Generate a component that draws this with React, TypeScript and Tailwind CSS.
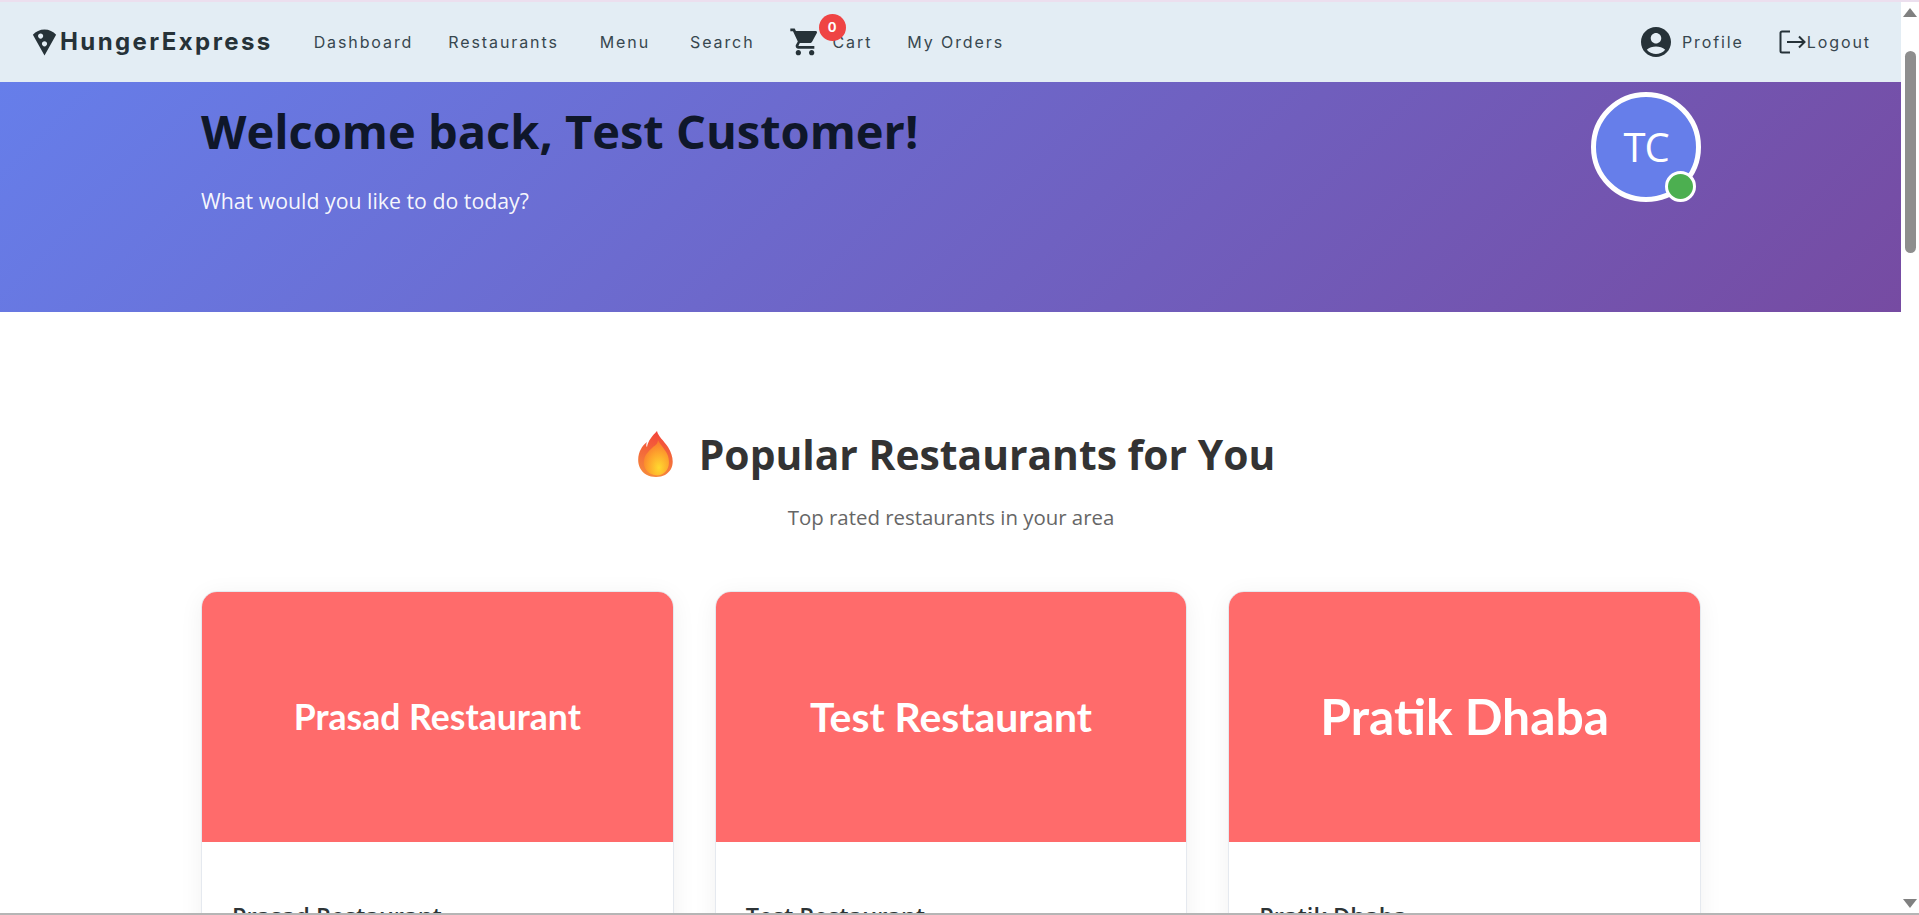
import React from 'react';

const navFont = "font-['Inter','Roboto',sans-serif]";
const uiFont = "font-['Open_Sans','Noto_Sans',sans-serif]";

const restaurants = [
  { name: 'Prasad Restaurant', banner: 'text-[35.600px]' },
  { name: 'Test Restaurant', banner: 'text-[40.900px]' },
  { name: 'Pratik Dhaba', banner: 'text-[49.800px]' },
];

function NavLink({ label, className = '' }: { label: string; className?: string }) {
  return <a className={`text-[16px] leading-none tracking-[1.9px] text-[#37474f] ${className}`}>{label}</a>;
}

function PizzaIcon() {
  return (
    <svg viewBox="0 0 24 24" className="h-[31px] w-[31px] fill-[#263238]">
      <path d="M12 2C8.43 2 5.23 3.54 3.01 6L12 22l8.99-16C18.78 3.55 15.57 2 12 2zM7 7c0-1.1.9-2 2-2s2 .9 2 2-.9 2-2 2-2-.9-2-2zm5 8c-1.1 0-2-.9-2-2s.9-2 2-2 2 .9 2 2-.9 2-2 2z" />
    </svg>
  );
}

function CartIcon() {
  return (
    <svg viewBox="0 0 24 24" className="h-[32px] w-[32px] fill-[#263238]">
      <path d="M7 18c-1.1 0-1.99.9-1.99 2S5.9 22 7 22s2-.9 2-2-.9-2-2-2zM1 2v2h2l3.6 7.59-1.35 2.45c-.16.28-.25.61-.25.96 0 1.1.9 2 2 2h12v-2H7.42c-.14 0-.25-.11-.25-.25l.03-.12.9-1.83h7.45c.75 0 1.41-.41 1.75-1.03l3.58-6.49c.08-.14.12-.31.12-.48 0-.55-.45-1-1-1H5.21l-.94-2H1zm16 16c-1.1 0-1.99.9-1.99 2s.89 2 1.99 2 2-.9 2-2-.9-2-2-2z" />
    </svg>
  );
}

function ProfileIcon() {
  return (
    <svg viewBox="0 0 24 24" className="h-[36px] w-[36px] fill-[#263238]">
      <path d="M12 2C6.48 2 2 6.48 2 12s4.48 10 10 10 10-4.48 10-10S17.52 2 12 2zm0 4c1.93 0 3.5 1.57 3.5 3.5S13.93 13 12 13s-3.5-1.57-3.5-3.5S10.07 6 12 6zm0 14c-2.03 0-4.43-.82-6.14-2.88C7.55 15.8 9.68 15 12 15s4.45.8 6.14 2.12C16.43 19.18 14.03 20 12 20z" />
    </svg>
  );
}

function LogoutIcon() {
  return (
    <svg viewBox="0 0 28 24" className="h-[24px] w-[28px] fill-none stroke-[#263238] stroke-2">
      <path d="M11 1.500H3a1.500 1.500 0 0 0-1.500 1.500v18a1.500 1.500 0 0 0 1.500 1.500h8" />
      <path d="M8 12h17M20 6.500l5.500 5.500-5.500 5.500" />
    </svg>
  );
}

function FlameIcon() {
  return (
    <svg viewBox="0 0 36 46" className="h-[46px] w-[36px]">
      <defs>
        <linearGradient id="flameOuter" x1="0.6" y1="0" x2="0.4" y2="1">
          <stop offset="0" stopColor="#f4433a" />
          <stop offset="0.5" stopColor="#f3683a" />
          <stop offset="1" stopColor="#f68a3c" />
        </linearGradient>
        <radialGradient id="flameInner" cx="0.6" cy="0.78" r="0.75">
          <stop offset="0" stopColor="#ffd92f" />
          <stop offset="0.55" stopColor="#fea52c" />
          <stop offset="1" stopColor="#f9772f" />
        </radialGradient>
      </defs>
      <path d="M19 0c1 5 7 10 11 16 5 8 6 16 3 22-3 5-8 8-15 8S5 43 2 37c-3-6-2-14 1-19 1-2 3-5 6-7-1 2-1 4 0 5 1-6 5-11 10-16z" fill="url(#flameOuter)" />
      <path d="M20 9c3 6 8 10 10 16 2 7 1 13-4 17-3 3-9 3-13 1-6-3-8-9-7-14 1-6 6-10 9-13 3-2 5-4 5-7z" fill="url(#flameInner)" />
    </svg>
  );
}

function RestaurantCard({ name, banner }: { name: string; banner: string }) {
  return (
    <div className="h-[400px] overflow-hidden rounded-[16px] border border-[#e5e9ef] bg-white shadow-[0_4px_24px_rgba(0,0,0,0.06)]">
      <div className="flex h-[250px] items-center justify-center bg-[#ff6b6b]">
        <span className={`font-['Lato',sans-serif] font-bold leading-none text-white ${banner}`}>{name}</span>
      </div>
      <div className="px-[30px] pt-[59px]">
        <h3 className={`text-[23.500px] font-semibold leading-[30px] text-[#2d3436] ${uiFont}`}>{name}</h3>
      </div>
    </div>
  );
}

function FakeScrollbar() {
  return (
    <div className="flex w-[18px] shrink-0 flex-col items-center bg-white pt-[6px] pb-[5px]">
      <div className="h-0 w-0 border-x-[7px] border-b-[9px] border-x-transparent border-b-[#808080]" />
      <div className="mt-[34px] h-[202px] w-[11px] rounded-full bg-[#8e8e8e]" />
      <div className="flex-1" />
      <div className="h-0 w-0 border-x-[7px] border-t-[9px] border-x-transparent border-t-[#808080]" />
    </div>
  );
}

export default function App() {
  return (
    <div className="flex h-[915px] flex-col overflow-hidden bg-white">
      <div className="h-[2px] shrink-0 bg-[#ecdfee]" />
      <div className="flex min-h-0 flex-1">
        <div className="min-w-0 flex-1 overflow-hidden">
          <nav className={`flex h-[80px] items-center bg-[#e3edf4] pl-[29px] pr-[30px] ${navFont}`}>
            <div className="flex items-center">
              <PizzaIcon />
              <span className="text-[24px] font-bold leading-none tracking-[2.4px] text-[#263238]">HungerExpress</span>
            </div>
            <NavLink label="Dashboard" className="ml-[41px]" />
            <NavLink label="Restaurants" className="ml-[35px]" />
            <NavLink label="Menu" className="ml-[41px]" />
            <NavLink label="Search" className="ml-[40px]" />
            <div className="relative ml-[34px] flex items-center">
              <CartIcon />
              <span className="absolute left-[30px] top-[-12px] flex h-[27px] w-[27px] items-center justify-center rounded-full bg-[#ef4444] text-[13px] font-bold text-white">0</span>
              <NavLink label="Cart" className="ml-[12px]" />
            </div>
            <NavLink label="My Orders" className="ml-[35px]" />
            <div className="flex-1" />
            <ProfileIcon />
            <NavLink label="Profile" className="ml-[8px]" />
            <div className="ml-[35px]"><LogoutIcon /></div>
            <NavLink label="Logout" />
          </nav>

          <header className={`h-[230px] bg-[linear-gradient(135deg,#667eea_0%,#764ba2_100%)] ${uiFont}`}>
            <div className="ml-[201px] flex w-[1500px] items-start justify-between">
              <div>
                <h1 className="mt-[17px] text-[47px] font-bold leading-[64px] text-[#0f172a]">Welcome back, Test Customer!</h1>
                <p className="mt-[24px] text-[21.300px] leading-[27px] text-white/95">What would you like to do today?</p>
              </div>
              <div className="relative mt-[10px] flex h-[110px] w-[110px] items-center justify-center rounded-full border-[5px] border-white bg-[#667eea] text-[40px] font-normal tracking-[-1px] text-white">
                TC
                <span className="absolute bottom-[-5px] right-0 h-[31px] w-[31px] rounded-full border-[3px] border-white bg-[#4caf50]" />
              </div>
            </div>
          </header>

          <main className={`ml-[201px] w-[1500px] pt-[112px] ${uiFont}`}>
            <div className="flex items-center justify-center pl-[11px]">
              <FlameIcon />
              <h2 className="ml-[25px] text-[40.800px] font-bold leading-[60px] text-[#333333]">Popular Restaurants for You</h2>
            </div>
            <p className="mt-[18px] text-center text-[20.400px] leading-[30px] text-[#666666]">Top rated restaurants in your area</p>
            <div className="mt-[59px] grid grid-cols-3 gap-[41px]">
              {restaurants.map((r) => (
                <RestaurantCard key={r.name} name={r.name} banner={r.banner} />
              ))}
            </div>
          </main>
        </div>
        <FakeScrollbar />
      </div>
      <div className="h-[2px] shrink-0 bg-[#b5b5b5]" />
    </div>
  );
}
